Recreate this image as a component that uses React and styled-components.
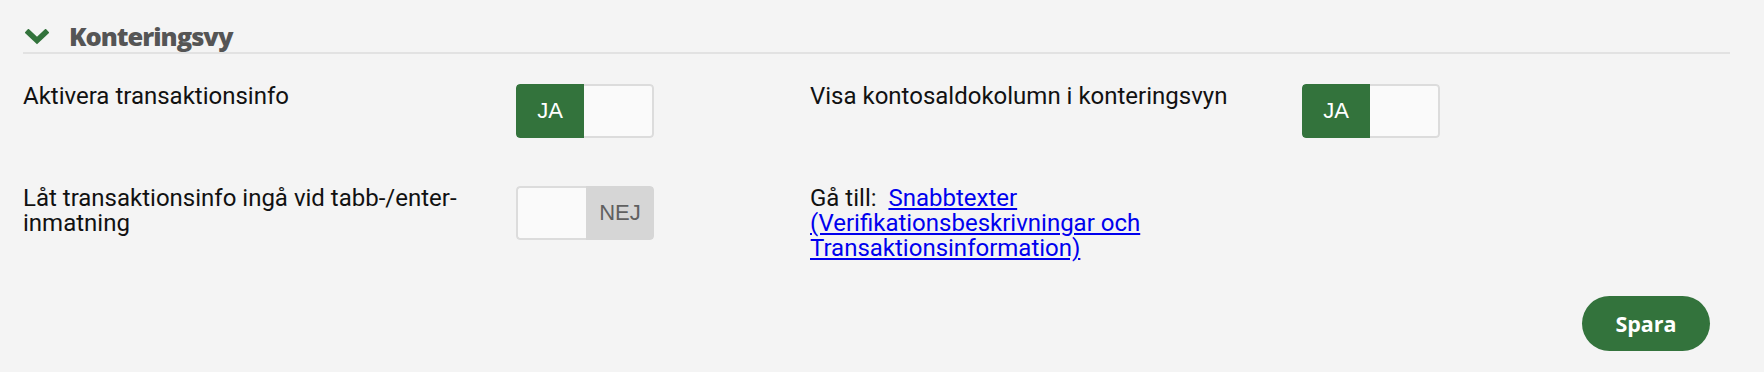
import React from "react";
import styled, { createGlobalStyle } from "styled-components";

const GlobalStyle = createGlobalStyle`
  body {
    margin: 0;
    background: #f4f4f4;
    font-family: Roboto, "Liberation Sans", sans-serif;
  }
`;

const green = "#33733c";

const Section = styled.section`
  padding: 20px 34px 0 23px;
`;

const Header = styled.div`
  display: flex;
  align-items: center;
  gap: 20px;
  height: 32px;
  border-bottom: 2px solid #e2e2e2;
`;

const Chevron = styled.svg`
  width: 24px;
  height: 16px;
  margin-left: 2px;
  margin-top: 2px;
`;

const Title = styled.h2`
  margin: 0;
  font-family: "Open Sans", sans-serif;
  font-weight: 800;
  font-size: 25.5px;
  letter-spacing: -1px;
  color: #555555;
`;

const Grid = styled.div`
  display: grid;
  grid-template-columns: 493px 294px 492px 1fr;
  row-gap: 48px;
  margin-top: 30px;
`;

const Label = styled.div`
  font-size: 24px;
  line-height: 25px;
  color: #111;
  padding-right: 20px;
  max-width: ${(p) => p.$max || "none"};
`;

const Toggle = styled.div`
  display: flex;
  width: 138px;
  height: 54px;
  border-radius: 4px;
  overflow: hidden;
  cursor: pointer;
`;

const Half = styled.div`
  flex: 1;
  display: flex;
  align-items: center;
  justify-content: center;
  box-sizing: border-box;
  font-family: "Liberation Sans", Arial, sans-serif;
  font-size: 22px;
  background: ${(p) => (p.$on ? green : p.$off ? "#d6d6d6" : "#fafafa")};
  color: ${(p) => (p.$on ? "#fff" : "#606060")};
  border: ${(p) => (p.$blank ? "2px solid #dcdcdc" : "none")};
  border-left-width: ${(p) => (p.$blank && p.$right ? "0" : "2px")};
  border-right-width: ${(p) => (p.$blank && !p.$right ? "0" : "2px")};
  border-radius: ${(p) => (p.$right ? "0 4px 4px 0" : "4px 0 0 4px")};
`;

const Link = styled.a`
  color: #0000ee;
  text-decoration: underline;
  cursor: pointer;
`;

const Footer = styled.div`
  display: flex;
  justify-content: flex-end;
  padding-right: 20px;
  margin-top: 35px;
`;

const SaveButton = styled.button`
  width: 128px;
  height: 55px;
  border: none;
  border-radius: 28px;
  background: ${green};
  color: #fff;
  font-family: "Open Sans", sans-serif;
  font-weight: 700;
  font-size: 21.5px;
  cursor: pointer;
`;

function Switch({ value, onToggle }) {
  if (value) {
    return (
      <Toggle onClick={onToggle}>
        <Half $on>JA</Half>
        <Half $blank $right />
      </Toggle>
    );
  }
  return (
    <Toggle onClick={onToggle}>
      <Half $blank />
      <Half $off $right>NEJ</Half>
    </Toggle>
  );
}

export default function App() {
  const [trans, setTrans] = React.useState(true);
  const [saldo, setSaldo] = React.useState(true);
  const [tab, setTab] = React.useState(false);

  return (
    <>
      <GlobalStyle />
      <Section>
        <Header>
          <Chevron viewBox="0 0 24 16">
            <path d="M3.5 3.5 L12 11.5 L20.5 3.5" fill="none" stroke={green} strokeWidth="5.5" strokeLinecap="square" />
          </Chevron>
          <Title>Konteringsvy</Title>
        </Header>
        <Grid>
          <Label>Aktivera transaktionsinfo</Label>
          <div>
            <Switch value={trans} onToggle={() => setTrans(!trans)} />
          </div>
          <Label>Visa kontosaldokolumn i konteringsvyn</Label>
          <div>
            <Switch value={saldo} onToggle={() => setSaldo(!saldo)} />
          </div>

          <Label>Låt transaktionsinfo ingå vid tabb-/enter-inmatning</Label>
          <div>
            <Switch value={tab} onToggle={() => setTab(!tab)} />
          </div>
          <Label $max="360px">
            Gå till:&nbsp; <Link>Snabbtexter (Verifikationsbeskrivningar och Transaktionsinformation)</Link>
          </Label>
          <div />
        </Grid>
        <Footer>
          <SaveButton>Spara</SaveButton>
        </Footer>
      </Section>
    </>
  );
}
